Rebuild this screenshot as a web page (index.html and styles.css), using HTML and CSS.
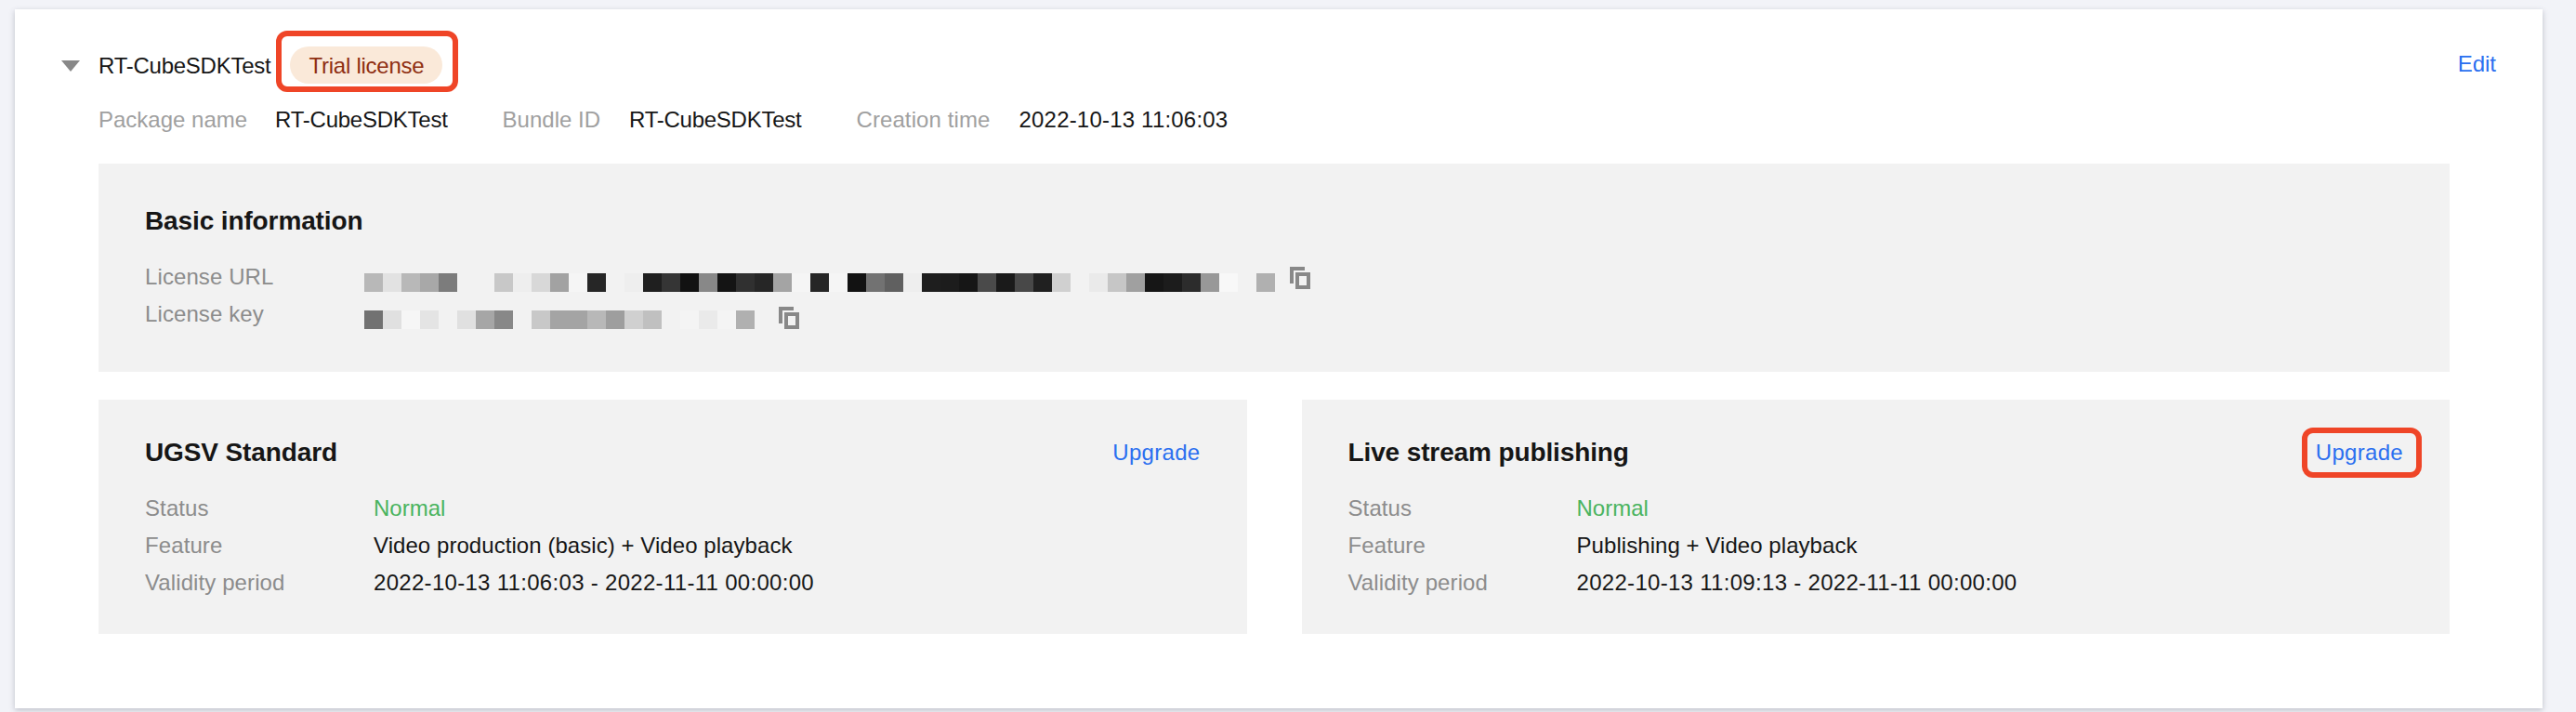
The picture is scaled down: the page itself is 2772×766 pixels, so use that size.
FILE: index.html
```html
<!DOCTYPE html>
<html lang="en">
<head>
<meta charset="utf-8">
<title>License</title>
<link rel="stylesheet" href="styles.css">
</head>
<body>
<section class="card">
  <header class="head">
    <svg class="caret" width="20" height="12" viewBox="0 0 20 12"><path d="M0 0H20L10 12Z"/></svg>
    <span class="name">RT-CubeSDKTest</span>
    <span class="badge">Trial license<i class="mark mark-badge"></i></span>
    <a class="link edit">Edit</a>
  </header>
  <div class="meta">
    <span class="label label-first">Package name</span><span class="val name-val">RT-CubeSDKTest</span>
    <span class="label group">Bundle ID</span><span class="val name-val">RT-CubeSDKTest</span>
    <span class="label group label-time">Creation time</span><span class="val date-short">2022-10-13 11:06:03</span>
  </div>
  <div class="panel basic">
    <h3 class="title">Basic information</h3>
    <div class="rows">
      <div class="row">
        <span class="key">License URL</span>
        <svg class="mosaic" width="980" height="20" viewBox="0 0 980 20" shape-rendering="crispEdges">
          <rect x="0" width="20" height="20" fill="#b8b8b8"/><rect x="20" width="20" height="20" fill="#e2e2e2"/><rect x="40" width="20" height="20" fill="#b8b8b8"/><rect x="60" width="20" height="20" fill="#a8a8a8"/><rect x="80" width="20" height="20" fill="#7c7c7c"/>
          <rect x="140" width="20" height="20" fill="#c8c8c8"/><rect x="160" width="20" height="20" fill="#eeeeee"/><rect x="180" width="20" height="20" fill="#d8d8d8"/><rect x="200" width="20" height="20" fill="#a2a2a2"/><rect x="220" width="20" height="20" fill="#f5f5f5"/><rect x="240" width="20" height="20" fill="#262626"/>
          <rect x="280" width="20" height="20" fill="#eeeeee"/><rect x="300" width="20" height="20" fill="#1f1f1f"/><rect x="320" width="20" height="20" fill="#353535"/><rect x="340" width="20" height="20" fill="#121212"/><rect x="360" width="20" height="20" fill="#888888"/><rect x="380" width="20" height="20" fill="#141414"/><rect x="400" width="20" height="20" fill="#303030"/><rect x="420" width="20" height="20" fill="#262626"/><rect x="440" width="20" height="20" fill="#a4a4a4"/><rect x="460" width="20" height="20" fill="#f5f5f5"/>
          <rect x="480" width="20" height="20" fill="#262626"/><rect x="500" width="20" height="20" fill="#f5f5f5"/><rect x="520" width="20" height="20" fill="#121212"/><rect x="540" width="20" height="20" fill="#727272"/><rect x="560" width="20" height="20" fill="#606060"/><rect x="580" width="20" height="20" fill="#eeeeee"/>
          <rect x="600" width="20" height="20" fill="#1e1e1e"/><rect x="620" width="20" height="20" fill="#1c1c1c"/><rect x="640" width="20" height="20" fill="#161616"/><rect x="660" width="20" height="20" fill="#4a4a4a"/><rect x="680" width="20" height="20" fill="#1a1a1a"/><rect x="700" width="20" height="20" fill="#484848"/><rect x="720" width="20" height="20" fill="#202020"/><rect x="740" width="20" height="20" fill="#d0d0d0"/>
          <rect x="780" width="20" height="20" fill="#eaeaea"/><rect x="800" width="20" height="20" fill="#c6c6c6"/><rect x="820" width="20" height="20" fill="#a0a0a0"/><rect x="840" width="20" height="20" fill="#161616"/><rect x="860" width="20" height="20" fill="#1c1c1c"/><rect x="880" width="20" height="20" fill="#2c2c2c"/><rect x="900" width="20" height="20" fill="#989898"/><rect x="920" width="20" height="20" fill="#f8f8f8"/>
          <rect x="960" width="20" height="20" fill="#b0b0b0"/>
        </svg>
        <svg class="copy copy-url" width="22" height="24" viewBox="0 0 22 24"><path d="M0 0H16V4H4V18H0Z"/><path fill-rule="evenodd" d="M6 6H22V24H6ZM10 10V20H18V10Z"/></svg>
      </div>
      <div class="row">
        <span class="key">License key</span>
        <svg class="mosaic" width="420" height="20" viewBox="0 0 420 20" shape-rendering="crispEdges">
          <rect x="0" width="20" height="20" fill="#727272"/><rect x="20" width="20" height="20" fill="#e0e0e0"/><rect x="40" width="20" height="20" fill="#f6f6f6"/><rect x="60" width="20" height="20" fill="#e4e4e4"/>
          <rect x="100" width="20" height="20" fill="#e0e0e0"/><rect x="120" width="20" height="20" fill="#a6a6a6"/><rect x="140" width="20" height="20" fill="#888888"/>
          <rect x="180" width="20" height="20" fill="#c8c8c8"/><rect x="200" width="20" height="20" fill="#a4a4a4"/><rect x="220" width="20" height="20" fill="#a4a4a4"/><rect x="240" width="20" height="20" fill="#b8b8b8"/><rect x="260" width="20" height="20" fill="#9e9e9e"/><rect x="280" width="20" height="20" fill="#d0d0d0"/><rect x="300" width="20" height="20" fill="#c0c0c0"/>
          <rect x="340" width="20" height="20" fill="#f4f4f4"/><rect x="360" width="20" height="20" fill="#eaeaea"/><rect x="380" width="20" height="20" fill="#f4f4f4"/><rect x="400" width="20" height="20" fill="#b0b0b0"/>
        </svg>
        <svg class="copy copy-key" width="22" height="24" viewBox="0 0 22 24"><path d="M0 0H16V4H4V18H0Z"/><path fill-rule="evenodd" d="M6 6H22V24H6ZM10 10V20H18V10Z"/></svg>
      </div>
    </div>
  </div>
  <div class="plans">
    <div class="panel plan">
      <div class="plan-head">
        <h3 class="title">UGSV Standard</h3>
        <a class="link upgrade">Upgrade</a>
      </div>
      <div class="rows">
        <div class="row"><span class="key">Status</span><span class="ok">Normal</span></div>
        <div class="row"><span class="key">Feature</span><span class="val feature">Video production (basic) + Video playback</span></div>
        <div class="row"><span class="key">Validity period</span><span class="val date">2022-10-13 11:06:03 - 2022-11-11 00:00:00</span></div>
      </div>
    </div>
    <div class="panel plan">
      <div class="plan-head">
        <h3 class="title">Live stream publishing</h3>
        <a class="link upgrade">Upgrade<i class="mark mark-link"></i></a>
      </div>
      <div class="rows">
        <div class="row"><span class="key">Status</span><span class="ok">Normal</span></div>
        <div class="row"><span class="key">Feature</span><span class="val feature">Publishing + Video playback</span></div>
        <div class="row"><span class="key">Validity period</span><span class="val date">2022-10-13 11:09:13 - 2022-11-11 00:00:00</span></div>
      </div>
    </div>
  </div>
</section>
</body>
</html>
```

FILE: styles.css
```css
* { box-sizing: border-box; }
html, body { margin: 0; height: 100%; }
body {
  background: #f2f3f8;
  padding: 10px 36px 0 16px;
  overflow: hidden;
  font: 24px/40px "Liberation Sans", Arial, sans-serif;
  color: #161616;
}
.card {
  height: 752px;
  background: #fff;
  padding: 40px 100px 0 90px;
  box-shadow: 0 2px 6px rgba(54, 58, 80, .28);
}
.head {
  display: flex;
  align-items: flex-start;
  height: 40px;
  position: relative;
}
.caret { fill: #888; position: absolute; left: -40px; top: 15px; }
.name, .name-val { letter-spacing: -.25px; }
.name { margin-right: 21px; padding-top: 1px; }
.badge {
  position: relative;
  height: 40px;
  width: 164px;
  padding-top: 1px;
  border-radius: 20px;
  background: #fae9d9;
  color: #8f2f12;
  text-align: center;
  letter-spacing: -.25px;
}
.mark {
  position: absolute;
  border: 6px solid #ef4527;
  border-radius: 12px;
}
.mark-badge { left: -15px; right: -17px; top: -17px; bottom: -9px; }
.mark-link { left: -15px; right: -20px; top: -6px; bottom: -8px; }
.link { position: relative; color: #2a6ff0; }
.upgrade { height: 40px; padding-top: 1px; letter-spacing: .3px; }
.edit {
  position: absolute;
  right: -50px;
  top: 0;
  line-height: 38px;
}
.meta { display: flex; height: 40px; margin-top: 18px; }
.label, .val { padding-top: 1px; }
.label { color: #a0a0a0; margin-right: 31px; }
.label-first { margin-right: 30px; }
.label-time { margin-right: 31px; letter-spacing: .1px; }
.group { margin-left: 59px; }
.date-short { letter-spacing: .2px; }
.panel { background: #f2f2f2; }
.basic { margin-top: 28px; padding: 41px 50px 43px; }
.title {
  margin: 0;
  height: 40px;
  padding-top: 1px;
  font-size: 28px;
  line-height: 40px;
  font-weight: 700;
  letter-spacing: -.12px;
}
.rows { margin-top: 20px; }
.row { display: flex; align-items: flex-start; height: 40px; }
.key, .row .val, .ok { padding-top: 1px; }
.key { width: 246px; flex: none; color: #8c8c8c; letter-spacing: .1px; }
.ok { color: #4ab45f; }
.feature { letter-spacing: .06px; }
.date { letter-spacing: .3px; }
.mosaic { flex: none; margin: 17px 0 0 -10px; }
.copy { flex: none; fill: #888; }
.copy-url { margin: 10px 0 0 16px; }
.copy-key { margin: 13px 0 0 26px; }
.plans {
  display: grid;
  grid-template-columns: 1fr 1fr;
  column-gap: 59px;
  margin-top: 30px;
}
.plan { padding: 36px 50px; height: 252px; }
.plan-head { display: flex; align-items: flex-start; justify-content: space-between; height: 40px; }
```
